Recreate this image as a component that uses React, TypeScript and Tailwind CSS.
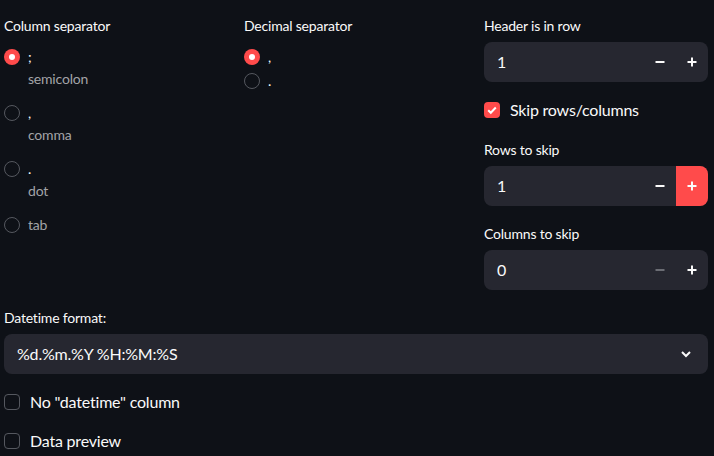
import React from 'react'

const font = { fontFamily: 'Lato, "Liberation Sans", sans-serif' }

function Radio({ checked }: { checked?: boolean }) {
  return checked ? (
    <span className="w-4 h-4 rounded-full bg-[#ff4b4b] flex items-center justify-center shrink-0">
      <span className="w-1.5 h-1.5 rounded-full bg-white" />
    </span>
  ) : (
    <span className="w-4 h-4 rounded-full border border-[#55585f] shrink-0" />
  )
}

function RadioGroup({
  label,
  options,
}: {
  label: string
  options: { value: string; caption?: string; checked?: boolean; muted?: boolean }[]
}) {
  return (
    <div className="flex flex-col">
      <div className="h-6 leading-6 text-sm text-[#fafafa]">{label}</div>
      <div className="mt-[7px] flex flex-col">
        {options.map(o => (
          <div key={o.value + (o.caption ?? '')} className={o.caption ? 'mb-3' : ''}>
            <div className="h-6 flex items-center gap-2">
              <Radio checked={o.checked} />
              <span className={`text-sm ${o.muted ? 'text-[#a3a4a8]' : 'text-[#fafafa]'}`}>
                {o.value}
              </span>
            </div>
            {o.caption && (
              <div className="pl-6 leading-5 text-sm text-[#a3a4a8]">{o.caption}</div>
            )}
          </div>
        ))}
      </div>
    </div>
  )
}

function Minus({ dim }: { dim?: boolean }) {
  return (
    <svg width="10" height="10" viewBox="0 0 10 10">
      <path d="M0.5 5h9" stroke={dim ? '#6b6d74' : '#fafafa'} strokeWidth="2" />
    </svg>
  )
}

function PlusIcon() {
  return (
    <svg width="10" height="10" viewBox="0 0 10 10">
      <path d="M0.5 5h9M5 0.5v9" stroke="#fafafa" strokeWidth="2" />
    </svg>
  )
}

function NumberInput({
  label,
  value,
  minusDisabled,
  plusActive,
}: {
  label: string
  value: string
  minusDisabled?: boolean
  plusActive?: boolean
}) {
  return (
    <div className="flex flex-col">
      <div className="h-6 leading-6 text-sm text-[#fafafa]">{label}</div>
      <div className="mt-1 h-10 rounded-lg bg-[#262730] flex items-center overflow-hidden">
        <span className="flex-1 pl-[13px] text-base text-[#fafafa]">{value}</span>
        <span className="w-8 h-full flex items-center justify-center">
          <Minus dim={minusDisabled} />
        </span>
        <span
          className={`w-8 h-full flex items-center justify-center ${
            plusActive ? 'bg-[#ff4b4b]' : ''
          }`}
        >
          <PlusIcon />
        </span>
      </div>
    </div>
  )
}

function Checkbox({ label, checked }: { label: string; checked?: boolean }) {
  return (
    <div className="h-6 flex items-center gap-2.5">
      {checked ? (
        <span className="w-4 h-4 rounded bg-[#ff4b4b] flex items-center justify-center">
          <svg width="12" height="12" viewBox="0 0 12 12">
            <path d="M2.2 6.2l2.6 2.6 5-5.3" stroke="#fff" strokeWidth="2" fill="none" />
          </svg>
        </span>
      ) : (
        <span className="w-4 h-4 rounded border border-[#55585f]" />
      )}
      <span className="text-base text-[#fafafa]">{label}</span>
    </div>
  )
}

export default function App() {
  return (
    <div className="min-h-screen bg-[#0e1117] tracking-[-0.2px]" style={font}>
      <div className="w-[704px] ml-1 pt-[14px] flex flex-col">
        <div className="grid grid-cols-3 gap-4">
          <RadioGroup
            label="Column separator"
            options={[
              { value: ';', caption: 'semicolon', checked: true },
              { value: ',', caption: 'comma' },
              { value: '.', caption: 'dot' },
              { value: 'tab', muted: true },
            ]}
          />
          <RadioGroup
            label="Decimal separator"
            options={[{ value: ',', checked: true }, { value: '.' }]}
          />
          <div className="flex flex-col gap-4">
            <NumberInput label="Header is in row" value="1" />
            <Checkbox label="Skip rows/columns" checked />
            <NumberInput label="Rows to skip" value="1" plusActive />
            <NumberInput label="Columns to skip" value="0" minusDisabled />
          </div>
        </div>

        <div className="mt-4 flex flex-col">
          <div className="h-6 leading-6 text-sm text-[#fafafa]">Datetime format:</div>
          <div className="mt-1 h-10 rounded-lg bg-[#262730] flex items-center justify-between pl-[13px] pr-4">
            <span className="text-base text-[#fafafa]">%d.%m.%Y %H:%M:%S</span>
            <svg width="12" height="12" viewBox="0 0 12 12">
              <path d="M2 4l4 4 4-4" stroke="#fafafa" strokeWidth="2" fill="none" />
            </svg>
          </div>
        </div>

        <div className="mt-4 flex flex-col gap-[15px]">
          <Checkbox label={'No "datetime" column'} />
          <Checkbox label="Data preview" />
        </div>
      </div>
    </div>
  )
}
